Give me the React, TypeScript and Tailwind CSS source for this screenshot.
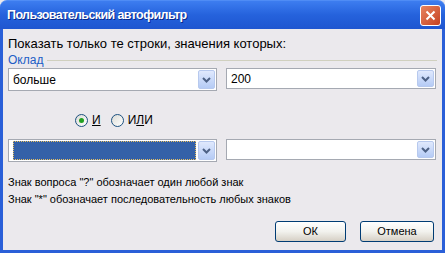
import { ReactNode } from 'react'

const font = { fontFamily: 'Tahoma, "Liberation Sans", "DejaVu Sans", sans-serif' }

function Arrow() {
  return (
    <div className="w-[17px] h-full flex items-center justify-center rounded-[2px] border border-[#b7c9ee] bg-gradient-to-b from-[#e0e9fd] to-[#b5cbf5]">
      <svg width="9" height="6" viewBox="0 0 9 6">
        <path d="M1 1 L4.5 4.5 L8 1" fill="none" stroke="#4d6185" strokeWidth="2" />
      </svg>
    </div>
  )
}

function Combo({ value, width, height, selected }: { value?: string; width: string; height: string; selected?: boolean }) {
  return (
    <div className={`${width} ${height} flex border border-[#a5a9b2] bg-white p-[1px]`}>
      <div className="flex-1 flex items-center pl-[3px] pr-[2px]">
        {selected ? (
          <div className="w-full h-full border border-dotted border-[#e8c060] bg-[#3461a8]" />
        ) : (
          <span className="text-[12px] text-black leading-none">{value}</span>
        )}
      </div>
      <Arrow />
    </div>
  )
}

function Radio({ checked, children }: { checked?: boolean; children: ReactNode }) {
  return (
    <div className="flex items-center gap-[4px]">
      <div className="w-[13px] h-[13px] rounded-full border border-[#1c5180] bg-gradient-to-br from-[#dcdcd6] to-white flex items-center justify-center">
        {checked && <div className="w-[5px] h-[5px] rounded-full bg-[#21a121]" />}
      </div>
      <span className="text-[12px] leading-[16px] text-black">{children}</span>
    </div>
  )
}

function Button({ children, width }: { children: ReactNode; width: string }) {
  return (
    <div className={`${width} h-[21px] rounded-[3px] border border-[#003c74] bg-gradient-to-b from-white via-[#f2f2ee] to-[#d6d0c5] flex items-center justify-center text-[11px] text-black`}>
      {children}
    </div>
  )
}

export default function App() {
  return (
    <div className="w-[445px] h-[253px] flex flex-col bg-[#ebe9ed]" style={font}>
      <div className="h-[29px] shrink-0 rounded-t-[7px] bg-gradient-to-b from-[#3d7df0] via-[#2562dc] to-[#1f56d0] flex items-center justify-between pl-[7px] pr-[4px] border-t border-[#4f8cf5]">
        <span className="text-[12.5px] font-bold tracking-[-0.6px] text-white [text-shadow:1px_1px_0_#0a2a8a]" style={{ fontFamily: '"Trebuchet MS", "Liberation Sans", sans-serif' }}>
          Пользовательский автофильтр
        </span>
        <div className="w-[21px] h-[21px] rounded-[3px] border border-white bg-gradient-to-br from-[#e7835f] to-[#c5401f] flex items-center justify-center">
          <svg width="11" height="11" viewBox="0 0 11 11">
            <path d="M1.5 1.5 L9.5 9.5 M9.5 1.5 L1.5 9.5" stroke="white" strokeWidth="2" />
          </svg>
        </div>
      </div>

      <div className="flex-1 flex flex-col border-x-[3px] border-b-[3px] border-[#2a5fd8] pl-[5px] pr-[5px]">
        <div className="mt-[8px] text-[13px] leading-[14px] text-black">Показать только те строки, значения которых:</div>
        <div className="mt-[3px] flex items-center gap-[4px]">
          <span className="text-[12px] leading-[13px] text-[#215dc6]">Оклад</span>
          <div className="flex-1 h-px bg-[#d0d0bf]" />
        </div>

        <div className="mt-[1px] flex items-start">
          <Combo value="больше" width="w-[209px]" height="h-[23px]" />
          <div className="ml-[9px]">
            <Combo value="200" width="w-[210px]" height="h-[21px]" />
          </div>
        </div>

        <div className="mt-[21px] flex items-center gap-[10px] pl-[67px]">
          <Radio checked>
            <span className="underline">И</span>
          </Radio>
          <Radio>
            И<span className="underline">Л</span>И
          </Radio>
        </div>

        <div className="mt-[11px] flex items-start">
          <Combo selected width="w-[209px]" height="h-[23px]" />
          <div className="ml-[9px]">
            <Combo width="w-[210px]" height="h-[21px]" />
          </div>
        </div>

        <div className="mt-[12px] text-[11px] leading-[17px] text-black">
          <div>Знак вопроса "?" обозначает один любой знак</div>
          <div>Знак "*" обозначает последовательность любых знаков</div>
        </div>

        <div className="mt-[13px] flex justify-end gap-[14px] pr-[3px]">
          <Button width="w-[71px]">ОК</Button>
          <Button width="w-[74px]">Отмена</Button>
        </div>
      </div>
    </div>
  )
}
